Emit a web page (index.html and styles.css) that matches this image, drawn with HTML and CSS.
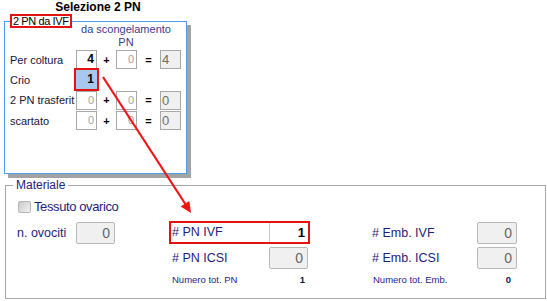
FILE: index.html
```html
<!DOCTYPE html>
<html lang="it">
<head>
  <meta charset="UTF-8" />
  <title>Selezione 2 PN</title>
  <link rel="stylesheet" href="styles.css">
</head>
<body>
  <div class="page">
    <!-- ========== SELEZIONE 2 PN ========== -->
    <div class="sel-title">Selezione 2 PN</div>
    <fieldset class="pn-panel">
      <legend class="pn-legend">2 PN da IVF</legend>
      <div class="pn-head">da scongelamento<br>PN</div>
      <div class="pn-grid">
        <span class="pn-label">Per coltura</span>
        <span class="box strong">4</span>
        <span class="op">+</span>
        <span class="box faint">0</span>
        <span class="op">=</span>
        <span class="box total">4</span>

        <span class="pn-label">Crio</span>
        <span class="box crio">1</span>

        <span class="pn-label">2 PN trasferit</span>
        <span class="box faint">0</span>
        <span class="op">+</span>
        <span class="box faint">0</span>
        <span class="op">=</span>
        <span class="box total">0</span>

        <span class="pn-label">scartato</span>
        <span class="box faint">0</span>
        <span class="op">+</span>
        <span class="box faint">0</span>
        <span class="op">=</span>
        <span class="box total">0</span>
      </div>
    </fieldset>

    <!-- ========== MATERIALE ========== -->
    <fieldset class="mat-panel">
      <legend class="mat-legend">Materiale</legend>
      <div class="check-row"><span class="check"></span>Tessuto ovarico</div>
      <div class="mat-grid">
        <div class="field narrow"><span>n. ovociti</span><span class="num">0</span></div>
        <div class="field mid hl"><span class="hl-label"># PN IVF</span><span class="num live">1</span></div>
        <div class="field wide"><span># Emb. IVF</span><span class="num">0</span></div>

        <div></div>
        <div class="field mid"><span># PN ICSI</span><span class="num">0</span></div>
        <div class="field wide"><span># Emb. ICSI</span><span class="num">0</span></div>

        <div></div>
        <div class="total-row mid"><span>Numero tot. PN</span><span class="tot-val">1</span></div>
        <div class="total-row wide"><span>Numero tot. Emb.</span><span class="tot-val">0</span></div>
      </div>
    </fieldset>

    <!-- ========== CALLOUT ARROW ========== -->
    <svg class="callout" width="547" height="301" viewBox="0 0 547 301">
      <line x1="103" y1="77" x2="186" y2="205" stroke="#ee1515" stroke-width="2.2" />
      <polygon points="191,213 180.6,206.6 189.4,200.9" fill="#ee1515" />
    </svg>
  </div>
</body>
</html>
```

FILE: styles.css
```css
* {
  margin: 0;
  padding: 0;
  box-sizing: border-box;
}

body {
  width: 547px;
  height: 301px;
  overflow: hidden;
  background: #fff;
  font-family: 'Liberation Sans', Arial, sans-serif;
  font-size: 11px;
  color: #16163e;
}

.page {
  position: relative;
  width: 547px;
  height: 301px;
}

/* =========================================
   TOP PANEL
   ========================================= */
.sel-title {
  width: 196px;
  height: 14px;
  line-height: 14px;
  text-align: center;
  font-size: 12px;
  font-weight: bold;
  color: #000;
}

.pn-panel {
  margin-left: 4px;
  width: 183px;
  height: 160px;
  border: 1px solid #4b9df0;
  box-shadow: 4px 4px 0 #a3a3a3;
  padding: 0 4px 0 5px;
  background: #fff;
}

.pn-legend {
  border: 2px solid #e51212;
  padding: 0 1px;
  font-size: 11px;
  line-height: 10px;
  letter-spacing: -0.4px;
  color: #000;
}

.pn-head {
  margin: -5px 0 0 62px;
  width: 108px;
  text-align: center;
  line-height: 13px;
  color: #3c3c88;
}

.pn-grid {
  margin-top: 1px;
  display: grid;
  grid-template-columns: 66px 21px 19px 21px 23px 21px;
  grid-auto-rows: 19px;
  row-gap: 1.4px;
  align-items: center;
}

.pn-label {
  grid-column: 1;
  white-space: nowrap;
  overflow: hidden;
  color: #141438;
}

.op {
  text-align: center;
  font-weight: bold;
  color: #000;
}

.box {
  height: 19px;
  border: 1px solid #a8a8a8;
  line-height: 17px;
  text-align: right;
  padding-right: 2px;
  background: #fff;
}

.box.strong {
  font-size: 12px;
  font-weight: bold;
  color: #000;
}

.box.faint {
  color: #a4a4a4;
}

.box.total {
  text-align: left;
  padding-left: 1px;
  background: #f0f0f0;
  font-size: 13px;
  color: #6e6e6e;
}

.box.crio {
  background: #a8c8ef;
  border-color: #a8c8ef;
  outline: 2px solid #e51212;
  font-size: 12px;
  font-weight: bold;
  color: #000;
}

/* =========================================
   MATERIALE
   ========================================= */
.mat-panel {
  margin: 4px 0 0 5px;
  width: 541px;
  height: 121px;
  border: 1px solid #a8a8a8;
  padding: 0 8px 0 7px;
  color: #1e1e78;
}

.mat-legend {
  padding: 0 3px;
  font-size: 12px;
  line-height: 14px;
}

.check-row {
  margin: 8px 0 0 5px;
  display: flex;
  align-items: center;
  gap: 3px;
  height: 13px;
  font-size: 13px;
  letter-spacing: -0.4px;
}

.check {
  width: 13px;
  height: 12px;
  border: 1px solid #b5b5b5;
  border-radius: 2px;
  background: linear-gradient(135deg, #c9c9c9, #f3f3f3);
}

.mat-grid {
  margin: 8px 0 0 4px;
  display: grid;
  grid-template-columns: 152px 203px 145px;
  grid-template-rows: 23px 22px 14px;
  row-gap: 3px;
  font-size: 12.5px;
}

.field {
  display: flex;
  align-items: center;
  justify-content: space-between;
}

.narrow { width: 98px; }
.mid { width: 141px; padding: 0 2px 0 3px; }
.wide { width: 145px; }

.num {
  width: 39px;
  height: 22px;
  border: 1px solid #b8b8b8;
  border-radius: 2px;
  background: #f0f0f0;
  text-align: right;
  padding-right: 4px;
  font-size: 14px;
  line-height: 20px;
  color: #666;
}

.wide .num {
  width: 40px;
}

.field.hl {
  height: 23px;
  border: 2px solid #e51212;
  padding: 0;
  align-items: stretch;
}

.hl-label {
  padding-left: 1px;
  line-height: 19px;
}

.num.live {
  height: 19px;
  border: none;
  border-left: 1px solid #c8c8c8;
  border-radius: 0;
  background: #fff;
  font-size: 13px;
  font-weight: bold;
  line-height: 19px;
  padding-right: 3px;
  color: #000;
}

.total-row {
  display: flex;
  align-items: center;
  justify-content: space-between;
  font-size: 9.5px;
  color: #24248c;
}

.total-row.mid { padding-right: 5px; }
.total-row.wide { padding: 0 6px 0 1px; }

.tot-val {
  font-weight: bold;
  color: #14144a;
}

/* =========================================
   CALLOUT ARROW (overlay)
   ========================================= */
.callout {
  position: absolute;
  top: 0;
  left: 0;
  pointer-events: none;
}
```
